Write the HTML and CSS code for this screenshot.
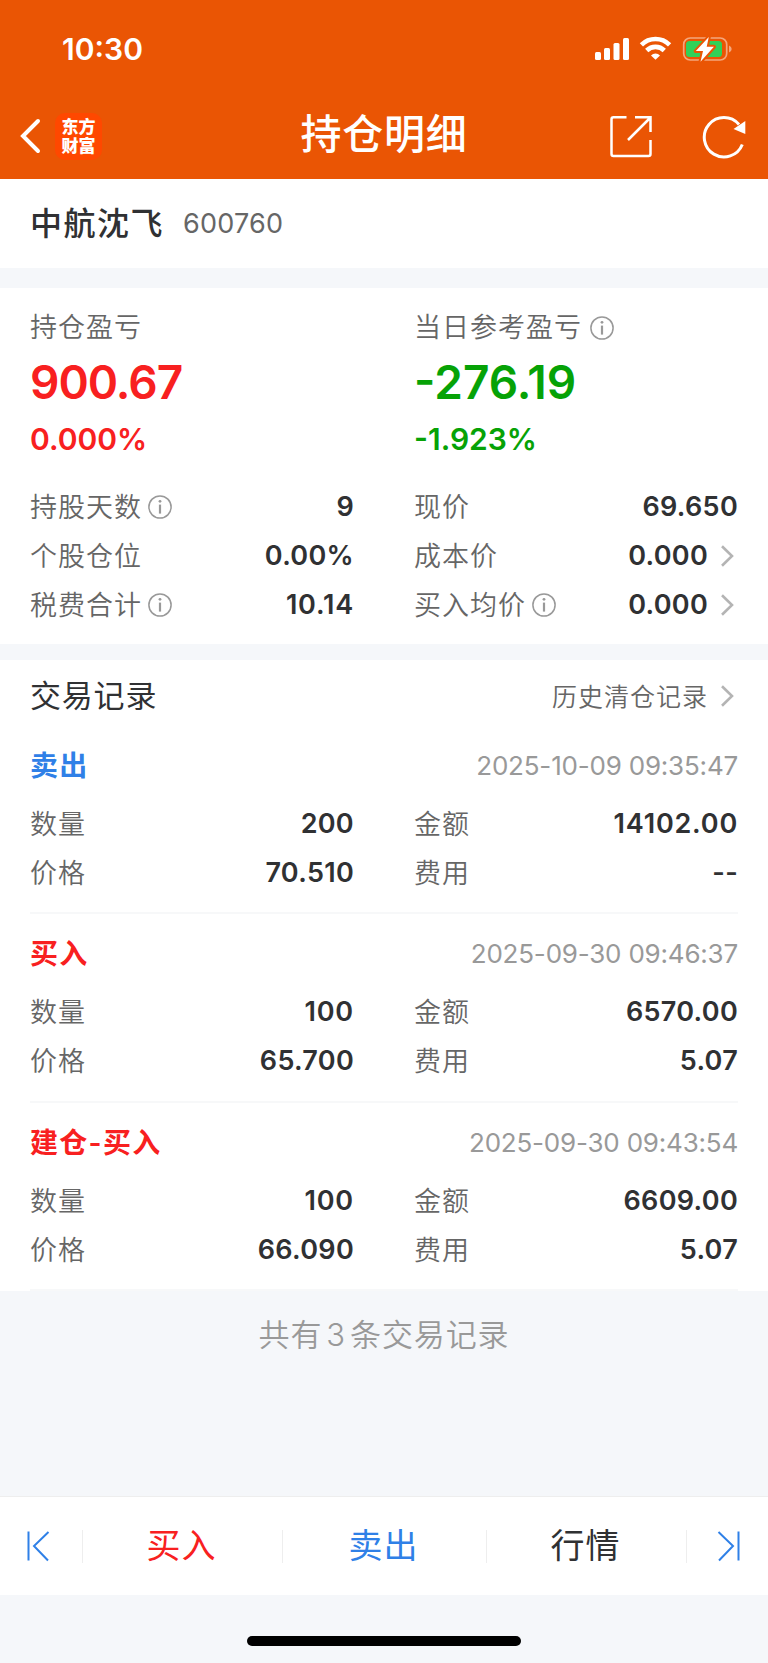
FILE: index.html
```html
<!DOCTYPE HTML>
<html lang="zh-CN">
<head>
<meta charset="utf-8">
<title>持仓明细</title>
<meta name="viewport" content="width=device-width">
<link rel="stylesheet" href="styles.css">
</head>

<body>
<svg width="0" height="0" class="defs">
	<symbol id="ic_info" viewBox="0 0 24 24">
		<circle cx="12" cy="12" r="11.1" fill="none" stroke="#999" stroke-width="1.5"/>
		<circle cx="12" cy="6.3" r="1.4" fill="#999"/>
		<path d="M12 9.6v9" stroke="#999" stroke-width="2.2"/>
	</symbol>
	<symbol id="ic_more" viewBox="0 0 14 22">
		<path d="M2 1.2l10 9.8L2 20.8" fill="none" stroke="#b4b4b4" stroke-width="2.6"/>
	</symbol>
</svg>
<div class="wrap">
	<header class="head">
		<div class="status">
			<span class="time">10:30</span>
			<svg class="status_ic" width="140" height="28" viewBox="0 0 140 28">
				<g fill="#fff">
					<rect x="1" y="17" width="6" height="8" rx="1.5"/>
					<rect x="10" y="13" width="6" height="12" rx="1.5"/>
					<rect x="19.5" y="8" width="6" height="17" rx="1.5"/>
					<rect x="29" y="3" width="6" height="22" rx="1.5"/>
					<path d="M61.500 24.800l-4.500-4.300a6.300 6.300 0 0 1 9 0z"/>
				</g>
				<g fill="none" stroke="#fff" stroke-width="4.600">
					<path d="M47.400 9.800a20 20 0 0 1 28.200 0"/>
					<path d="M52.700 15.500a12.600 12.600 0 0 1 17.600 0"/>
				</g>
				<rect x="89.700" y="3" width="43" height="22" rx="6.500" fill="none" stroke="#f4a67c" stroke-width="1.700"/>
				<path d="M135 10.500q2.700 1 2.700 3.500t-2.700 3.500z" fill="#f4a67c"/>
				<rect x="92" y="6" width="36" height="16" rx="3.500" fill="#30d158"/>
				<path d="M114.800 2l-13 14h7.200l-2.500 10.800 13.400-15h-7.200z" fill="#fff" stroke="#ea5504" stroke-width="4" paint-order="stroke" stroke-linejoin="round"/>
			</svg>
		</div>
		<div class="nav">
			<a class="back" href="javascript:void(0);"><svg width="22" height="38" viewBox="0 0 22 38"><path d="M18 4L3 19l15 15" fill="none" stroke="#fff" stroke-width="4" stroke-linecap="round"/></svg></a>
			<span class="logo">东方<br/>财富</span>
			<h1>持仓明细</h1>
			<svg class="share" width="44" height="44" viewBox="0 0 44 44" fill="none" stroke="#fff" stroke-width="2.500">
				<path d="M17.500 2.300H4.500q-2 0-2 2V39q0 2 2 2h35q2 0 2-2V25"/>
				<path d="M26 2.300h15.500V17M41 3L19 25"/>
			</svg>
			<svg class="reload" width="46" height="44" viewBox="0 0 46 44">
				<path d="M41.300 29.500A19.700 19.700 0 1 1 38 9.500" fill="none" stroke="#fff" stroke-width="3"/>
				<path d="M44.300 6v13L32.500 14z" fill="#fff"/>
			</svg>
		</div>
	</header>

	<section class="stock">
		<b>中航沈飞</b><span>600760</span>
	</section>

	<section class="profit">
		<div class="cols sum">
			<div class="red">
				<p class="label">持仓盈亏</p>
				<p class="big tight">900.67</p>
				<p class="rate">0.000%</p>
			</div>
			<div class="green">
				<p class="label">当日参考盈亏<svg class="info far"><use href="#ic_info"/></svg></p>
				<p class="big">-276.19</p>
				<p class="rate">-1.923%</p>
			</div>
		</div>
		<ul class="cols list">
			<li><span>持股天数</span><svg class="info"><use href="#ic_info"/></svg><em>9</em></li>
			<li><span>现价</span><em>69.650</em></li>
			<li><span>个股仓位</span><em>0.00%</em></li>
			<li><span>成本价</span><em>0.000</em><svg class="more"><use href="#ic_more"/></svg></li>
			<li><span>税费合计</span><svg class="info"><use href="#ic_info"/></svg><em class="wide">10.14</em></li>
			<li><span>买入均价</span><svg class="info"><use href="#ic_info"/></svg><em>0.000</em><svg class="more"><use href="#ic_more"/></svg></li>
		</ul>
	</section>

	<section class="record">
		<div class="record_head">
			<h2>交易记录</h2>
			<a href="javascript:void(0);">历史清仓记录</a><svg class="more"><use href="#ic_more"/></svg>
		</div>
		<article>
			<div class="record_t"><b class="blue">卖出</b><time>2025-10-09 09:35:47</time></div>
			<ul class="cols list">
				<li><span>数量</span><em>200</em></li>
				<li><span>金额</span><em class="wide">14102.00</em></li>
				<li><span>价格</span><em>70.510</em></li>
				<li><span>费用</span><em>--</em></li>
			</ul>
		</article>
		<article>
			<div class="record_t"><b class="red">买入</b><time>2025-09-30 09:46:37</time></div>
			<ul class="cols list">
				<li><span>数量</span><em class="wide">100</em></li>
				<li><span>金额</span><em>6570.00</em></li>
				<li><span>价格</span><em>65.700</em></li>
				<li><span>费用</span><em>5.07</em></li>
			</ul>
		</article>
		<article>
			<div class="record_t"><b class="red">建仓-买入</b><time>2025-09-30 09:43:54</time></div>
			<ul class="cols list">
				<li><span>数量</span><em class="wide">100</em></li>
				<li><span>金额</span><em>6609.00</em></li>
				<li><span>价格</span><em>66.090</em></li>
				<li><span>费用</span><em>5.07</em></li>
			</ul>
		</article>
	</section>
	<p class="total">共有<i>3</i>条交易记录</p>

	<footer class="foot">
		<a href="javascript:void(0);"><svg width="24" height="32" viewBox="0 0 24 32"><path d="M2.500 1.500v29M22.500 2L8 16l14 14.500" fill="none" stroke="#2f80e7" stroke-width="2"/></svg></a>
		<a href="javascript:void(0);" class="red"><span>买入</span></a>
		<a href="javascript:void(0);" class="blue"><span>卖出</span></a>
		<a href="javascript:void(0);"><span>行情</span></a>
		<a href="javascript:void(0);"><svg width="24" height="32" viewBox="0 0 24 32"><path d="M21.500 1.500v29M1.500 2L16 16 2 30.500" fill="none" stroke="#2f80e7" stroke-width="2"/></svg></a>
	</footer>
	<div class="home"></div>
</div>
</body>
</html>
```

FILE: styles.css
```css
* {
	margin:0;
	padding:0;
	box-sizing:border-box;
}
body {
	background:#f5f7fa;
	color:#303133;
	font-family:Inter,"Noto Sans CJK SC",sans-serif;
	font-size:27px;
}
a {
	color:inherit;
	text-decoration:none;
}
ul {
	list-style:none;
}
em, i {
	font-style:normal;
}
svg {
	flex:none;
}
.defs {
	position:absolute;
}
.wrap {
	display:flex;
	flex-direction:column;
	height:1663px;
}
.red {
	color:#f82020;
}
.green {
	color:#06a206;
}
.blue {
	color:#2f80e7;
}

/* header */
.head {
	height:179px;
	background:#ea5504;
	color:#fff;
}
.status {
	display:flex;
	align-items:center;
	justify-content:space-between;
	height:98px;
	padding:0 34px 0 62px;
}
.time {
	font-size:30px;
	font-weight:600;
}
.nav {
	display:flex;
	align-items:center;
	height:76px;
	padding:0 21px 0 20px;
}
.back {
	display:flex;
}
.logo {
	width:47px;
	height:47px;
	margin-left:13px;
	padding-top:5px;
	border-radius:10px;
	background:#ff4800;
	font-size:17px;
	font-weight:900;
	line-height:19px;
	text-align:center;
}
.nav h1 {
	flex:1;
	padding:0 0 4px 57px;
	font-size:41px;
	font-weight:500;
	letter-spacing:.8px;
	line-height:60px;
	text-align:center;
}
.share {
	margin:2px 48px 0 0;
}
.reload {
	margin-top:1px;
}

.stock {
	display:flex;
	align-items:center;
	height:89px;
	padding:0 30px;
	background:#fff;
}
.stock b {
	padding-bottom:5px;
	font-size:32px;
	font-weight:500;
	letter-spacing:1.5px;
}
.stock span {
	margin-left:19px;
	color:#666;
	font-size:27px;
	letter-spacing:.2px;
}

/* profit */
.profit {
	height:356px;
	margin-top:20px;
	padding:20px 30px 0;
	background:#fff;
}
.cols {
	display:grid;
	grid-template-columns:1fr 1fr;
	column-gap:60px;
}
.sum {
	height:174px;
}
.label {
	display:flex;
	align-items:center;
	height:40px;
	color:#666;
	font-weight:350;
	letter-spacing:1px;
	line-height:40px;
}
.big {
	font-size:46px;
	font-weight:600;
	line-height:68px;
}
.tight {
	letter-spacing:-1px;
}
.rate {
	font-size:30px;
	font-weight:600;
	line-height:46px;
}
.list li {
	display:flex;
	align-items:center;
	height:49px;
}
.list span {
	padding-bottom:2px;
	color:#666;
	font-weight:350;
	letter-spacing:1px;
}
.list em {
	margin-left:auto;
	font-weight:600;
	letter-spacing:.3px;
}
.list .wide {
	letter-spacing:.8px;
}
.info {
	width:24px;
	height:24px;
	margin-left:6px;
}
.far {
	margin-left:8px;
}
.more {
	width:14px;
	height:22px;
	margin:0 4px 0 12px;
}

/* records */
.record {
	height:631px;
	margin-top:16px;
	padding:0 30px;
	background:#fff;
}
.record_head {
	display:flex;
	align-items:center;
	height:72px;
}
.record_head h2 {
	flex:1;
	padding-bottom:5px;
	font-size:31px;
	font-weight:400;
	letter-spacing:.8px;
}
.record_head a {
	padding-bottom:3px;
	color:#666;
	font-size:25px;
	font-weight:350;
	letter-spacing:1px;
}
.record article {
	height:189px;
	padding-top:6px;
	border-bottom:2px solid #f7f8f9;
}
.record article:first-of-type {
	height:182px;
	padding-top:0;
}
.record article:last-child {
	height:188px;
}
.record_t {
	display:flex;
	align-items:center;
	justify-content:space-between;
	height:67px;
}
.record_t b {
	padding-bottom:3px;
	font-size:28px;
	font-weight:600;
	letter-spacing:1.3px;
}
.record_t time {
	color:#999;
	font-size:26px;
	letter-spacing:-.2px;
}
.total {
	flex:1;
	padding-top:20px;
	color:#999;
	font-size:31px;
	font-weight:350;
	line-height:48px;
	letter-spacing:.9px;
	text-align:center;
}
.total i {
	margin:0 4px;
}

/* bottom bar */
.foot {
	display:grid;
	grid-template-columns:83px 200px 204px 200px 81px;
	align-items:center;
	height:99px;
	border-top:1px solid #eee;
	background:#fff;
	font-size:34px;
}
.foot a {
	display:flex;
	align-items:center;
	justify-content:center;
	height:33px;
	border-right:1px solid #eee;
	letter-spacing:1px;
}
.foot span {
	padding:0 2px 5px 0;
}
.foot a:first-child {
	padding-right:6px;
}
.foot a:last-child {
	padding-left:3px;
	border:0;
}
.home {
	width:274px;
	height:10px;
	margin:41px auto 17px;
	border-radius:5px;
	background:#000;
}
```
